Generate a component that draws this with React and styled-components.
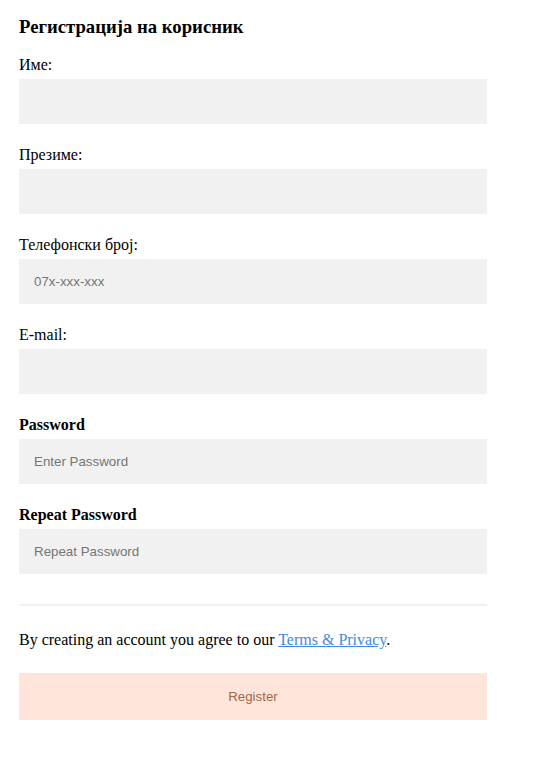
import React from "react";
import styled, { createGlobalStyle } from "styled-components";

const GlobalStyle = createGlobalStyle`
    * {
        box-sizing: border-box;
    }
    body {
        margin: 0;
        background: #ffffff;
        font-family: "Liberation Serif", "Times New Roman", serif;
        font-size: 16px;
        color: #000;
    }
`;

const Container = styled.form`
    width: 468px;
    margin: 16px 0 0 19px;
`;

const Title = styled.h3`
    font-size: 18.72px;
    font-weight: bold;
    margin: 0 0 18px 0;
`;

const Label = styled.label`
    display: block;
    font-size: 16px;
    line-height: 18px;
    font-weight: ${props => (props.bold ? "bold" : "normal")};
`;

const Input = styled.input`
    display: block;
    width: 100%;
    height: 45px;
    padding: 15px;
    margin: 5px 0 22px 0;
    border: none;
    background: #f1f1f1;
    font-family: "Liberation Sans", Arial, sans-serif;
    font-size: 13.33px;
    color: #000;
    outline: none;

    &::placeholder {
        color: #757575;
    }
`;

const Divider = styled.hr`
    border: 1px solid #f1f1f1;
    margin: 30px 0 25px 0;
`;

const Note = styled.p`
    margin: 0 0 24px 0;
    line-height: 18px;
`;

const Link = styled.a`
    color: #3c8de0;
`;

const RegisterButton = styled.button`
    display: block;
    width: 100%;
    height: 47px;
    padding: 16px 20px;
    border: none;
    background: #fee4d9;
    color: #a0694b;
    font-family: "Liberation Sans", Arial, sans-serif;
    font-size: 13.33px;
    cursor: pointer;
`;

const fields = [
    { label: "Име:", type: "text" },
    { label: "Презиме:", type: "text" },
    { label: "Телефонски број:", type: "text", placeholder: "07x-xxx-xxx" },
    { label: "E-mail:", type: "text" },
    { label: "Password", type: "password", placeholder: "Enter Password", bold: true },
    { label: "Repeat Password", type: "password", placeholder: "Repeat Password", bold: true }
];

const App = () => (
    <>
        <GlobalStyle />
        <Container onSubmit={e => e.preventDefault()}>
            <Title>Регистрација на корисник</Title>
            {fields.map(field => (
                <React.Fragment key={field.label}>
                    <Label bold={field.bold}>{field.label}</Label>
                    <Input type={field.type} placeholder={field.placeholder} />
                </React.Fragment>
            ))}
            <Divider />
            <Note>
                By creating an account you agree to our <Link href="#">Terms &amp; Privacy</Link>.
            </Note>
            <RegisterButton type="submit">Register</RegisterButton>
        </Container>
    </>
);

export default App;
